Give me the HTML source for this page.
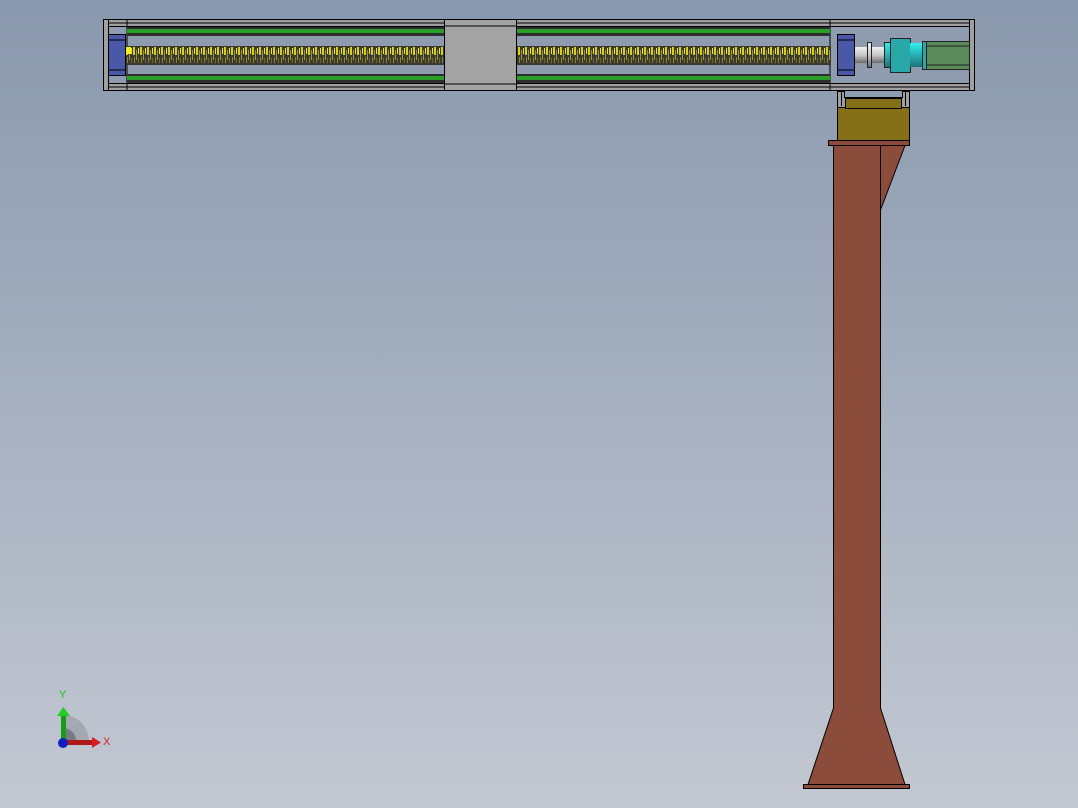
<!DOCTYPE html>
<html><head><meta charset="utf-8"><style>
html,body{margin:0;padding:0;width:1078px;height:808px;overflow:hidden}
body{background:linear-gradient(#8a98ad 0%,#a3aebe 45%,#c3c8d2 100%)}
svg{display:block}
</style></head><body>
<svg width="1078" height="808" viewBox="0 0 1078 808" xmlns="http://www.w3.org/2000/svg">
<defs>
<pattern id="thr" x="0" y="46" width="7" height="19" patternUnits="userSpaceOnUse">
<rect width="7" height="19" fill="#3a3a2e"/>
<rect x="0" y="1" width="2" height="8" fill="#d8d020"/>
<rect x="3" y="4" width="1" height="10" fill="#a09830"/>
<rect x="5" y="2" width="1" height="6" fill="#f0e830"/>
<rect x="1" y="11" width="1" height="6" fill="#8a8430"/>
<rect x="5" y="12" width="1" height="5" fill="#6a6a30"/>
</pattern>
<linearGradient id="shaft" x1="0" y1="0" x2="0" y2="1">
<stop offset="0" stop-color="#f0f0f0"/><stop offset="0.5" stop-color="#c8c8c8"/><stop offset="1" stop-color="#6a6a6a"/></linearGradient>
<linearGradient id="cy" x1="0" y1="0" x2="0" y2="1">
<stop offset="0" stop-color="#30f0f0"/><stop offset="1" stop-color="#207078"/></linearGradient>
</defs>
<g stroke="#000" stroke-width="1">
<rect x="103.5" y="19.5" width="871" height="71" fill="#8f9cb0"/>
<rect x="103.5" y="19.5" width="871" height="7" fill="#a0a0a0"/>
<line x1="103" y1="23" x2="975" y2="23"/>
<rect x="103.5" y="83.5" width="871" height="7" fill="#a0a0a0"/>
<line x1="103" y1="87" x2="975" y2="87"/>
<rect x="103.5" y="19.5" width="5" height="71" fill="#a0a0a0"/>
<rect x="969.5" y="19.5" width="5" height="71" fill="#a0a0a0"/>
<line x1="127" y1="19" x2="127" y2="91"/>
<line x1="830" y1="19" x2="830" y2="91"/>
</g>
<rect x="127" y="27" width="703" height="9" fill="#2e2e2e"/>
<rect x="127" y="29" width="703" height="4" fill="#2aa02a"/>
<rect x="127" y="74" width="703" height="9" fill="#2e2e2e"/>
<rect x="127" y="76" width="703" height="4" fill="#2aa02a"/>
<rect x="126" y="46" width="705" height="19" fill="url(#thr)"/>
<rect x="126" y="47" width="5" height="7" fill="#f4f020"/>
<g stroke="#000" stroke-width="1">
<rect x="444.5" y="19.5" width="72" height="71" fill="#a3a3a3"/>
<line x1="444" y1="26" x2="517" y2="26"/><line x1="444" y1="84" x2="517" y2="84"/>
<rect x="108.5" y="34.5" width="17" height="41" fill="#4a58a8"/>
<line x1="108" y1="40" x2="126" y2="40"/><line x1="108" y1="70" x2="126" y2="70"/>
<rect x="837.5" y="34.5" width="17" height="41" fill="#4a58a8"/>
<line x1="837" y1="40" x2="855" y2="40"/><line x1="837" y1="70" x2="855" y2="70"/>
</g>
<rect x="855" y="47" width="35" height="16" fill="url(#shaft)"/>
<rect x="867.5" y="42.5" width="4" height="25" fill="url(#shaft)" stroke="#222"/>
<rect x="884.5" y="42.5" width="6" height="25" fill="url(#cy)" stroke="#222"/>
<rect x="890.5" y="38.5" width="20" height="34" fill="#28a8a8" stroke="#222"/>
<rect x="910" y="43" width="13" height="24" fill="url(#cy)"/>
<rect x="922.5" y="41.5" width="4" height="28" fill="#28a8a8" stroke="#222"/>
<rect x="926.5" y="41.5" width="43" height="28" fill="#5a8a5a" stroke="#222"/>
<line x1="927" y1="46" x2="969" y2="46" stroke="#222"/><line x1="927" y1="65" x2="969" y2="65" stroke="#222"/>
<g stroke="#000" stroke-width="1">
<path d="M837.5 91.5 H844.5 V97.5 H902.5 V91.5 H909.5 V107.5 H837.5 Z" fill="#a0a0a0"/>
<path d="M841.5 91.5 V106 M905.5 91.5 V106" />
<rect x="837.5" y="107.5" width="72" height="33" fill="#857018"/>
<rect x="845.5" y="98.5" width="56" height="10" fill="#857018"/>
<rect x="828.5" y="140.5" width="81" height="5" fill="#8b4c3c"/>
<path d="M880.5 145.5 H905 L880.5 210 Z" fill="#8b4c3c"/>
<path d="M833.5 145.5 H880.5 V708 L905 784.5 H808 L833.5 708 Z" fill="#8b4c3c"/>
<rect x="803.5" y="784.5" width="106" height="4" fill="#8b4c3c"/>
</g>
<path d="M63 741 L63 715 A26 26 0 0 1 89 741 Z" fill="#a4a8b0"/>
<path d="M63 741 L63 728 A13 13 0 0 1 76 741 Z" fill="#767a82"/>
<rect x="61" y="715" width="5" height="26" fill="#1a9a1a"/>
<path d="M57 716 L63.5 707 L70 716 Z" fill="#22cc22"/>
<rect x="63" y="740" width="30" height="5" fill="#b01818"/>
<path d="M92 737 L101 742.5 L92 748 Z" fill="#d02020"/>
<circle cx="63" cy="743" r="5" fill="#1020c0"/>
<text x="59" y="698" font-family="Liberation Sans, sans-serif" font-size="11" fill="#20c020">Y</text>
<text x="103" y="745" font-family="Liberation Sans, sans-serif" font-size="11" fill="#d02020">X</text>
</svg>
</body></html>
